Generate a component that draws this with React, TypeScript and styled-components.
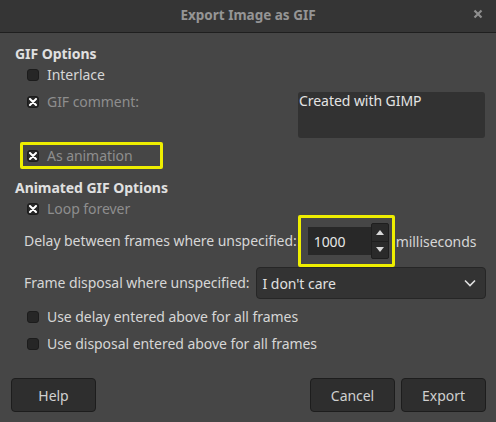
import React from "react";
import styled, { createGlobalStyle } from "styled-components";

const Global = createGlobalStyle`
  html, body { margin: 0; padding: 0; background: #464646; }
  body { font-family: "Noto Sans", "DejaVu Sans", sans-serif; }
  * { box-sizing: border-box; }
`;

const Window = styled.div`
  width: 496px;
  height: 422px;
  background: #464646;
  display: flex;
  flex-direction: column;
  overflow: hidden;
`;

const TitleBar = styled.div`
  height: 33px;
  background: #353535;
  border-bottom: 1px solid #1f1f1f;
  display: flex;
  align-items: center;
  justify-content: center;
  position: relative;
  flex-shrink: 0;
`;

const Title = styled.div`
  color: #959595;
  font-size: 13.5px;
  font-weight: 700;
  margin-top: -3px;
`;

const Close = styled.div`
  position: absolute;
  right: 11px;
  top: 6px;
  width: 14px;
  height: 16px;
  display: flex;
  align-items: center;
  justify-content: center;
`;

const Body = styled.div`
  flex: 1;
  display: flex;
  flex-direction: column;
  padding: 12px 10px 10px 15px;
  letter-spacing: -0.05px;
`;

const Heading = styled.div<{ $top?: number }>`
  color: #e0e0e0;
  font-size: 14px;
  font-weight: 700;
  line-height: 18px;
  height: 18px;
  margin-top: ${(p) => p.$top ?? 0}px;
`;

const CheckRow = styled.div<{ $top?: number }>`
  display: flex;
  align-items: center;
  gap: 8px;
  height: 20px;
  padding-left: 12px;
  margin-top: ${(p) => p.$top ?? 0}px;
`;

const Box = styled.div`
  width: 12px;
  height: 12px;
  border-radius: 3px;
  background: #262626;
  border: 1px solid #1c1c1c;
  display: flex;
  align-items: center;
  justify-content: center;
  flex-shrink: 0;
`;

const Label = styled.span<{ $dim?: boolean }>`
  color: ${(p) => (p.$dim ? "#8e8e8e" : "#d6d6d6")};
  font-size: 14px;
  line-height: 18px;
  white-space: nowrap;
`;

const CommentRow = styled.div`
  display: flex;
  justify-content: space-between;
  align-items: flex-start;
  margin-top: 7px;
  padding-right: 1px;
`;

const TextArea = styled.div`
  width: 187px;
  height: 46px;
  background: #323232;
  border-radius: 3px;
  color: #e4e4e4;
  font-size: 14px;
  line-height: 18px;
  padding: 0 1px;
`;

const Highlight = styled.div`
  align-self: flex-start;
  margin-left: 5px;
  margin-top: 4px;
  width: 143px;
  height: 27px;
  border: 3px solid #eeee00;
  border-radius: 2px;
  display: flex;
  align-items: center;
  padding-left: 4px;
`;

const HighlightInner = styled.div`
  display: flex;
  align-items: center;
  gap: 8px;
`;

const FormRow = styled.div<{ $top?: number }>`
  display: flex;
  align-items: center;
  padding-left: 9px;
  margin-top: ${(p) => p.$top ?? 0}px;
`;

const SpinHighlight = styled.div`
  width: 97px;
  height: 52px;
  border: 3px solid #eeee00;
  border-radius: 2px;
  display: flex;
  align-items: center;
  padding-left: 7px;
  margin-left: 1px;
`;

const Spin = styled.div`
  display: flex;
  align-items: stretch;
  height: 36px;
`;

const SpinEntry = styled.div`
  width: 63px;
  height: 28px;
  align-self: center;
  background: #282828;
  color: #e6e6e6;
  font-size: 14px;
  display: flex;
  align-items: center;
  padding-left: 6px;
`;

const SpinButtons = styled.div`
  width: 18px;
  display: flex;
  flex-direction: column;
  background: #2a2a2a;
  border: 1px solid #1e1e1e;
  border-radius: 2px;
`;

const SpinBtn = styled.div<{ $top?: boolean }>`
  flex: 1;
  display: flex;
  align-items: center;
  justify-content: center;
  border-top: ${(p) => (p.$top ? "none" : "1px solid #1e1e1e")};
`;

const Suffix = styled.span`
  color: #d6d6d6;
  font-size: 14px;
  margin-left: 1px;
`;

const Combo = styled.div`
  width: 230px;
  height: 32px;
  margin-left: 6px;
  background: #333333;
  border: 1px solid #262626;
  border-radius: 4px;
  display: flex;
  align-items: center;
  justify-content: space-between;
  padding: 0 9px 0 6px;
  color: #e0e0e0;
  font-size: 14px;
`;

const Spacer = styled.div`
  flex: 1;
`;

const Buttons = styled.div`
  display: flex;
  align-items: center;
  margin-left: -4px;
  gap: 6px;
`;

const Button = styled.div`
  width: 85px;
  height: 34px;
  background: #2e2e2e;
  border: 1px solid #1d1d1d;
  border-radius: 4px;
  display: flex;
  align-items: center;
  justify-content: center;
  color: #d0d0d0;
  font-size: 14px;
`;

const Cross = () => (
  <svg width="8" height="8" viewBox="0 0 8 8">
    <path d="M1 1 L7 7 M7 1 L1 7" stroke="#ffffff" strokeWidth="2" strokeLinecap="round" />
  </svg>
);

const Check = ({ on, label, dim, top }: { on?: boolean; label: string; dim?: boolean; top?: number }) => (
  <CheckRow $top={top}>
    <Box>{on && <Cross />}</Box>
    <Label $dim={dim}>{label}</Label>
  </CheckRow>
);

export default function App() {
  return (
    <>
      <Global />
      <Window>
        <TitleBar>
          <Title>Export Image as GIF</Title>
          <Close>
            <svg width="10" height="10" viewBox="0 0 10 10">
              <path d="M1.5 1.5 L8.5 8.5 M8.5 1.5 L1.5 8.5" stroke="#8e8e8e" strokeWidth="2.2" />
            </svg>
          </Close>
        </TitleBar>
        <Body>
          <Heading>GIF Options</Heading>
          <Check label="Interlace" top={2} />
          <CommentRow>
            <Check on dim label="GIF comment:" />
            <TextArea>Created with GIMP</TextArea>
          </CommentRow>
          <Highlight>
            <HighlightInner>
              <Box>
                <Cross />
              </Box>
              <Label $dim>As animation</Label>
            </HighlightInner>
          </Highlight>
          <Heading $top={10}>Animated GIF Options</Heading>
          <Check on dim label="Loop forever" top={2} />
          <FormRow $top={-4}>
            <Label>Delay between frames where unspecified:</Label>
            <SpinHighlight>
              <Spin>
                <SpinEntry>1000</SpinEntry>
                <SpinButtons>
                  <SpinBtn $top>
                    <svg width="8" height="5" viewBox="0 0 8 5">
                      <path d="M0 5 L4 0 L8 5 Z" fill="#d8d8d8" />
                    </svg>
                  </SpinBtn>
                  <SpinBtn>
                    <svg width="8" height="5" viewBox="0 0 8 5">
                      <path d="M0 0 L4 5 L8 0 Z" fill="#d8d8d8" />
                    </svg>
                  </SpinBtn>
                </SpinButtons>
              </Spin>
            </SpinHighlight>
            <Suffix>milliseconds</Suffix>
          </FormRow>
          <FormRow>
            <Label>Frame disposal where unspecified:</Label>
            <Combo>
              <span>I don't care</span>
              <svg width="12" height="8" viewBox="0 0 12 8">
                <path d="M1 1.5 L6 6.5 L11 1.5" stroke="#e0e0e0" strokeWidth="1.6" fill="none" />
              </svg>
            </Combo>
          </FormRow>
          <Check label="Use delay entered above for all frames" top={8} />
          <Check label="Use disposal entered above for all frames" top={7} />
          <Spacer />
          <Buttons>
            <Button>Help</Button>
            <Spacer />
            <Button>Cancel</Button>
            <Button>Export</Button>
          </Buttons>
        </Body>
      </Window>
    </>
  );
}
